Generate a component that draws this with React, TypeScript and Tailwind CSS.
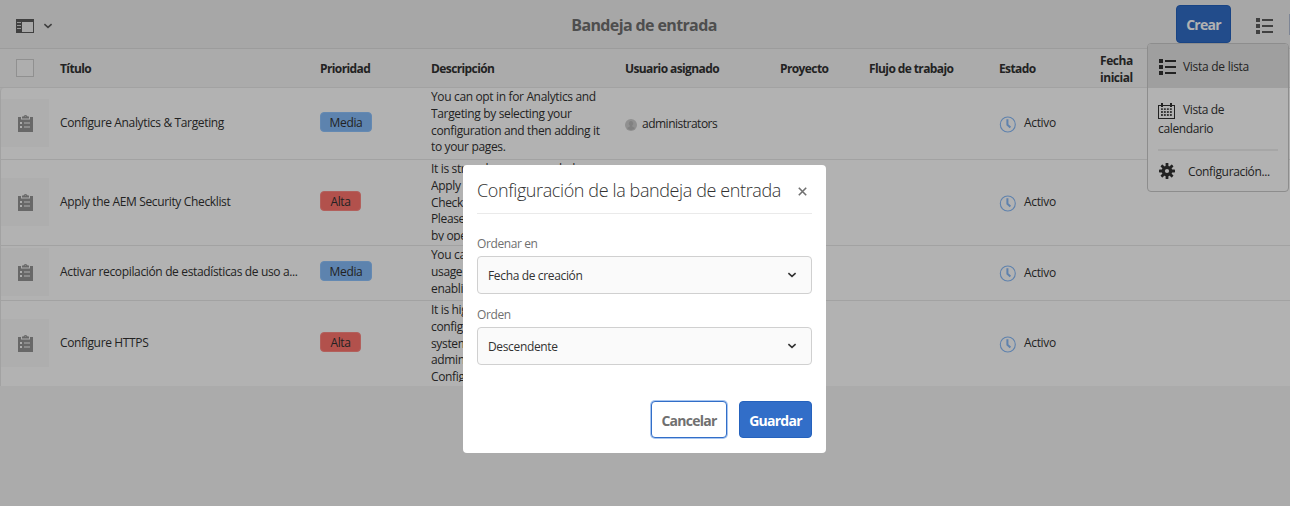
import React from 'react';

type Row = {
  title: string;
  priority: 'Media' | 'Alta';
  lines: string[];
  user?: string;
  height: string;
  clip: string;
};

const rows: Row[] = [
  {
    title: 'Configure Analytics & Targeting',
    priority: 'Media',
    lines: ['You can opt in for Analytics and', 'Targeting by selecting your', 'configuration and then adding it', 'to your pages.'],
    user: 'administrators',
    height: 'h-[72px]',
    clip: 'max-h-[70px]',
  },
  {
    title: 'Apply the AEM Security Checklist',
    priority: 'Alta',
    lines: ['It is strongly recommended', 'Apply the AEM', 'Checklist', 'Please', 'by opening'],
    height: 'h-[86px]',
    clip: 'max-h-[81px]',
  },
  {
    title: 'Activar recopilación de estadísticas de uso a...',
    priority: 'Media',
    lines: ['You can', 'usage', 'enabling'],
    height: 'h-[55px]',
    clip: 'max-h-[52px]',
  },
  {
    title: 'Configure HTTPS',
    priority: 'Alta',
    lines: ['It is highly', 'configure', 'system', 'administration', 'Configure'],
    height: 'h-[85px]',
    clip: 'max-h-[81px]',
  },
];

const columns = 'grid grid-cols-[59px_260px_111px_194px_155px_89px_130px_101px_1fr]';

function RailIcon() {
  return (
    <svg width="18" height="14" viewBox="0 0 18 14" shapeRendering="crispEdges">
      <path fill="#5c5c5c" fillRule="evenodd" d="M0 0h18v14H0zM6 3v10h11V3z" />
      <path fill="#d8d8d8" d="M1 3h4v1H1zM1 6h4v1H1zM1 9h4v1H1z" />
    </svg>
  );
}

function Chevron({ className = '' }: { className?: string }) {
  return (
    <svg className={className} width="10" height="6" viewBox="0 0 10 6" fill="none" stroke="currentColor" strokeWidth="1.6">
      <path d="M1.4 1.2 5 4.4 8.6 1.2" />
    </svg>
  );
}

function ListIcon({ className = '' }: { className?: string }) {
  return (
    <svg className={className} width="17" height="16" viewBox="0 0 17 16" fill="currentColor" shapeRendering="crispEdges">
      <path d="M0 0h4v4H0zM0 6h4v4H0zM0 12h4v4H0zM6 1h11v2H6zM6 7h11v2H6zM6 13h11v2H6z" />
    </svg>
  );
}

function CalendarIcon() {
  return (
    <svg width="18" height="16" viewBox="0 0 18 16" fill="#323232" shapeRendering="crispEdges">
      <path fillRule="evenodd" d="M0 2h17v14H0zM1 3v12h15V3z" />
      <path d="M3 0h2v4H3zM12 0h2v4h-2z" />
      <g fillOpacity="0.85" shapeRendering="auto">
        <path d="M5.9 5.2h1.9v1.9H5.9zM8.9 5.2h1.9v1.9H8.9zM11.9 5.2h1.9v1.9h-1.9zM3 8.1h1.9V10H3zM5.9 8.1h1.9V10H5.9zM8.9 8.1h1.9V10H8.9zM11.9 8.1h1.9V10h-1.9zM3 11h1.9v1.9H3zM5.9 11h1.9v1.9H5.9zM8.9 11h1.9v1.9H8.9zM11.9 11h1.9v1.9h-1.9zM3 5.2h1.9v1.9H3z" />
      </g>
    </svg>
  );
}

function GearIcon() {
  return (
    <svg width="16" height="16" viewBox="0 0 16 16">
      <g fill="#323232">
        <rect x="6.6" y="0" width="2.8" height="16" rx=".6" />
        <rect x="6.6" y="0" width="2.8" height="16" rx=".6" transform="rotate(45 8 8)" />
        <rect x="6.6" y="0" width="2.8" height="16" rx=".6" transform="rotate(90 8 8)" />
        <rect x="6.6" y="0" width="2.8" height="16" rx=".6" transform="rotate(135 8 8)" />
        <circle cx="8" cy="8" r="5.3" />
      </g>
      <circle cx="8" cy="8" r="2.1" fill="#fff" />
    </svg>
  );
}

function ClipboardIcon() {
  return (
    <svg width="15" height="18" viewBox="0 0 15 18">
      <path fill="#959595" fillRule="evenodd" d="M0 3h3v2.5h9V3h3v15H0zM2 8v2h2V8zm0 4v2h2v-2zm4-3.5v1h6v-1zm0 4v1h6v-1z" />
      <path fill="#959595" fillRule="evenodd" d="M4 2.6h1.4a2.2 2.2 0 0 1 4.2 0H11v2H4zm2.6.2h1.8a.95.95 0 0 0-1.8 0z" />
    </svg>
  );
}

function ClockIcon() {
  return (
    <svg width="17" height="17" viewBox="0 0 17 17" fill="none" stroke="#88baf8">
      <circle cx="8.8" cy="8.5" r="7.5" strokeWidth="1.1" />
      <path d="M8.4 3.2v5.6l3 2.8" strokeWidth="2" />
    </svg>
  );
}

function Avatar() {
  return (
    <svg width="12" height="12" viewBox="0 0 12 12">
      <circle cx="6" cy="6" r="6" fill="#cecece" />
      <path fill="#b9b9b9" d="M6 2a2.1 2.5 0 0 1 1.2 4.6v.8L10 9a5 5 0 0 1-8 0l2.8-1.6v-.8A2.1 2.5 0 0 1 6 2z" />
    </svg>
  );
}

function Tag({ level }: { level: Row['priority'] }) {
  return level === 'Media' ? (
    <span className="flex h-5 w-[52px] items-center justify-center rounded-[4px] border border-[#90c4ff] bg-[#86bcfa] pt-[2px]">Media</span>
  ) : (
    <span className="flex h-5 w-[41px] items-center justify-center rounded-[4px] border border-[#ff8a85] bg-[#ff746e] pt-[2px]">Alta</span>
  );
}

function ViewMenu() {
  return (
    <div className="absolute top-[43px] left-[1147px] h-[149px] w-[142px] overflow-hidden rounded-[4px] border border-[#cacaca] bg-white">
      <div className="flex h-11 items-center bg-[#e4e4e4] pl-[11px]">
        <ListIcon className="mt-px mr-[7px]" />
        <span className="pt-px tracking-[-0.28px]">Vista de lista</span>
      </div>
      <div className="h-[61px] px-[10px] pt-[12px] leading-[19px]">
        <span className="flex items-center">
          <span className="mr-[7px] pt-[2px]">
            <CalendarIcon />
          </span>
          Vista de
        </span>
        calendario
      </div>
      <div className="mx-[10px] h-[2px] bg-[#eeeeee]" />
      <div className="flex h-10 items-center pl-[11px]">
        <span className="mr-[13px]">
          <GearIcon />
        </span>
        <span className="pt-[2px]">Configuración...</span>
      </div>
    </div>
  );
}

function Select({ label, value }: { label: string; value: string }) {
  return (
    <div className="h-[71px]">
      <div className="h-5 leading-4 tracking-[-0.4px] text-[#707070]">{label}</div>
      <div className="flex h-[38px] items-center justify-between rounded-[4px] border border-[#d0d0d0] bg-[#fafafa] pr-[14px] pl-[10px]">
        <span className="pt-[2px]">{value}</span>
        <Chevron />
      </div>
    </div>
  );
}

function SettingsDialog() {
  return (
    <div className="h-[288px] w-[363px] rounded-[4px] bg-white px-[14px]">
      <div className="flex h-[49px] items-center justify-between border-b border-[#eaeaea] pr-[5px]">
        <h2 className="pt-[3px] text-[18px] font-light tracking-[-0.39px] whitespace-nowrap">Configuración de la bandeja de entrada</h2>
        <svg className="mt-[4px]" width="9" height="9" viewBox="0 0 9 9" stroke="#707070" strokeWidth="1.6">
          <path d="M.8.8l7.4 7.4M8.2.8.8 8.2" />
        </svg>
      </div>
      <div className="pt-[22px]">
        <Select label="Ordenar en" value="Fecha de creación" />
        <Select label="Orden" value="Descendente" />
      </div>
      <div className="mt-[23px] flex justify-end gap-3 text-[14px] font-bold tracking-[-0.75px]">
        <button className="h-[37px] w-[76px] rounded-[4px] border border-[#326ec8] bg-white pt-px text-[#707070] shadow-[0_0_0_1px_#a9c6f0]">Cancelar</button>
        <button className="h-[37px] w-[73px] rounded-[4px] border border-[#2562bd] bg-[#326ec8] pt-px text-white">Guardar</button>
      </div>
    </div>
  );
}

export default function App() {
  return (
    <div className="relative h-[506px] w-[1290px] overflow-hidden bg-[#f5f5f5] font-['Open_Sans',sans-serif] text-[12px] tracking-[-0.35px] text-[#323232]">
      <header className="grid h-[49px] grid-cols-3 items-center border-b border-[#e0e0e0] bg-[#f0f0f0]">
        <div className="flex items-center gap-[9px] pt-[3px] pl-4 text-[#5c5c5c]">
          <RailIcon />
          <Chevron />
        </div>
        <h1 className="pt-px pr-[2px] text-center text-[16px] font-bold tracking-[-0.62px] text-[#707070]">Bandeja de entrada</h1>
        <div className="flex items-center justify-end">
          <button className="h-[38px] w-[55px] rounded-[4px] border border-[#2562bd] bg-[#326ec8] pt-px text-[14px] font-bold tracking-[-0.75px] text-white">Crear</button>
          <ListIcon className="mt-1 mr-4 ml-[25px] text-[#5c5c5c]" />
          <div className="h-[21px] w-px bg-[#b4bfd6]" />
        </div>
      </header>

      <div className={`${columns} h-[39px] items-center border-b border-[#e8e8e8] pl-px text-[12px] leading-[16.8px] font-bold tracking-[-0.6px]`}>
        <div className="pl-[15px]">
          <div className="h-[18px] w-[18px] border border-[#cfcfcf] bg-[#fafafa]" />
        </div>
        <div className="pt-[2px]">Título</div>
        <div className="pt-[2px]">Prioridad</div>
        <div className="pt-[2px]">Descripción</div>
        <div className="pt-[2px]">Usuario asignado</div>
        <div className="pt-[2px]">Proyecto</div>
        <div className="pt-[2px]">Flujo de trabajo</div>
        <div className="pt-[2px]">Estado</div>
        <div className="pt-[4px] tracking-[-0.45px]">
          Fecha
          <br />
          inicial
        </div>
      </div>

      <div className="rounded-tl-[4px] border-l border-[#e8e8e8] bg-white">
        {rows.map((row, i) => (
          <div key={row.title} className={`${columns} ${row.height} items-center border-[#e8e8e8] ${i < 3 ? 'border-b' : ''}`}>
            <div className="pb-[2px]">
              <div className="flex h-12 w-12 items-center justify-center bg-[#fafafa]">
                <ClipboardIcon />
              </div>
            </div>
            <div className="pb-[2px] whitespace-nowrap">{row.title}</div>
            <div className="pb-[4px]">
              <Tag level={row.priority} />
            </div>
            <div className={`${row.clip} self-start overflow-hidden pt-px leading-[16.8px] whitespace-nowrap`}>
              {row.lines.map((line) => (
                <div key={line}>{line}</div>
              ))}
            </div>
            <div className="flex items-center gap-[5px]">
              {row.user && (
                <>
                  <span className="pt-[3px]">
                    <Avatar />
                  </span>
                  <span className="pt-px tracking-[-0.5px]">{row.user}</span>
                </>
              )}
            </div>
            <div />
            <div />
            <div className="flex items-center gap-2 pb-px">
              <span className="pt-[2px]">
                <ClockIcon />
              </span>
              Activo
            </div>
            <div />
          </div>
        ))}
      </div>

      <ViewMenu />

      <div className="absolute inset-0 bg-black/30" />
      <div className="absolute top-[165px] left-[463px]">
        <SettingsDialog />
      </div>
    </div>
  );
}
